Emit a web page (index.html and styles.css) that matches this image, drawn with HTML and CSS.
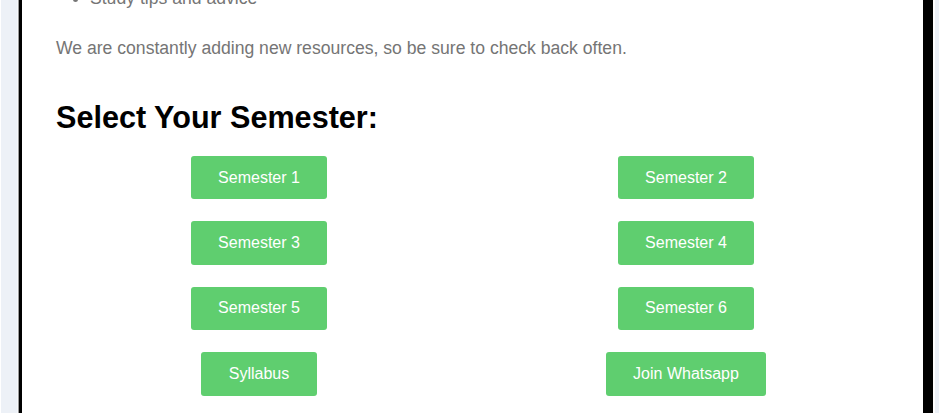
FILE: index.html
```html
<!DOCTYPE html>
<html lang="en">
<head>
<meta charset="utf-8">
<title>Select Your Semester</title>
<link rel="stylesheet" href="styles.css">
</head>
<body>
<div class="shell">
  <div class="gutter-left"></div>
  <main class="card">
    <ul class="tips">
      <li>Study tips and advice</li>
    </ul>
    <p class="note">We are constantly adding new resources, so be sure to check back often.</p>
    <h2 class="title">Select Your Semester:</h2>
    <div class="grid">
      <a class="btn" href="#">Semester 1</a>
      <a class="btn" href="#">Semester 2</a>
      <a class="btn" href="#">Semester 3</a>
      <a class="btn" href="#">Semester 4</a>
      <a class="btn" href="#">Semester 5</a>
      <a class="btn" href="#">Semester 6</a>
      <a class="btn" href="#">Syllabus</a>
      <a class="btn" href="#">Join Whatsapp</a>
    </div>
  </main>
  <div class="gutter-right"></div>
</div>
</body>
</html>
```

FILE: styles.css
```css
html, body {
  margin: 0;
  padding: 0;
  background: #ffffff;
  height: 413px;
  overflow: hidden;
}

body {
  font-family: "Liberation Sans", Arial, sans-serif;
}

.shell {
  display: flex;
  height: 413px;
  padding-left: 1px;
}

.gutter-left {
  width: 16px;
  flex: none;
  background: #edf1f7;
  border-right: 1px solid #f6f8fb;
  box-shadow: 1px 0 0 #9a9a9a;
  margin-right: 1px;
}

.card {
  flex: none;
  width: 833px;
  padding: 0 34px;
  border-left: 3px solid #000;
  border-right: 10px solid #000;
  background: #fff;
  overflow: hidden;
}

.gutter-right {
  flex: none;
  width: 4px;
  margin-left: 2px;
  background: #edf1f7;
}

.tips {
  margin: -14px 0 26px;
  padding-left: 34px;
  font-size: 17.6px;
  line-height: 24px;
  color: #757575;
}

.note {
  margin: 0 0 39px;
  font-size: 17.6px;
  line-height: 24px;
  color: #757575;
}

.title {
  margin: 0 0 21px;
  font-size: 30.6px;
  line-height: 36px;
  font-weight: bold;
  color: #000;
}

.grid {
  display: grid;
  grid-template-columns: 1fr 1fr;
  column-gap: 21px;
  row-gap: 22px;
  justify-items: center;
}

.btn {
  display: inline-block;
  padding: 12.5px 27.5px;
  font-size: 16px;
  line-height: 18.4px;
  color: #fff;
  background: #5fce6f;
  border-radius: 3px;
  text-decoration: none;
}
```
